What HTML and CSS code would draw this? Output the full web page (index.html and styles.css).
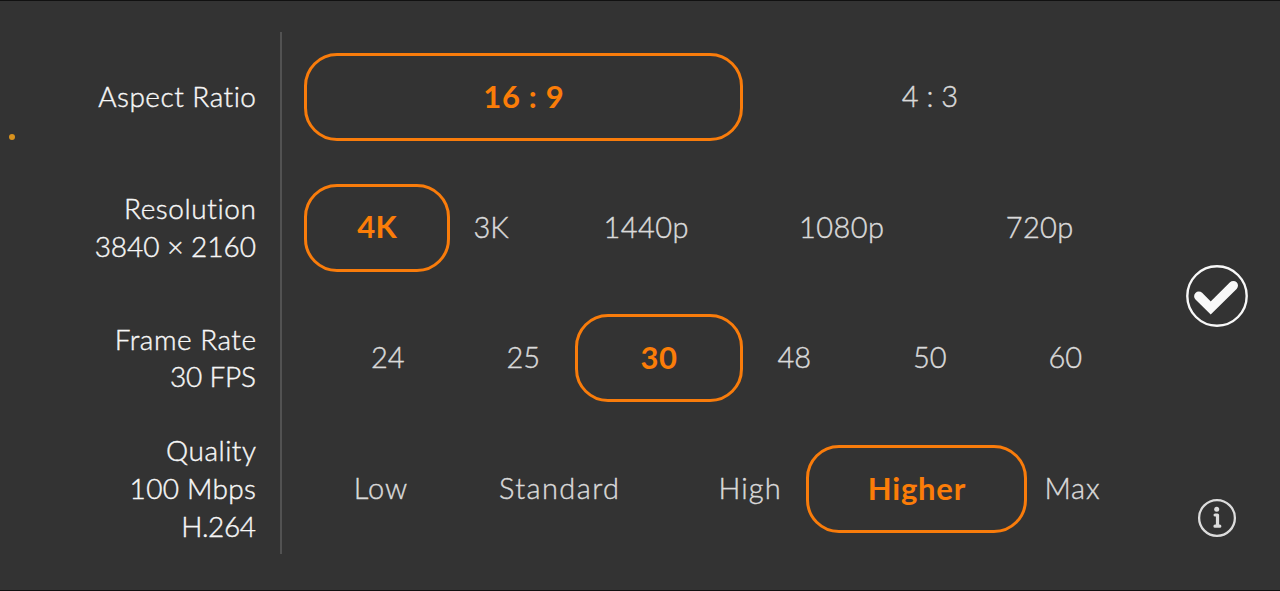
FILE: index.html
```html
<!DOCTYPE html>
<html lang="en">
<head>
<meta charset="utf-8">
<title>Video Settings</title>
<link rel="stylesheet" href="styles.css">
</head>
<body>
<main class="panel">
  <span class="indicator"></span>
  <section class="labels">
    <div class="label"><span class="t-aspect">Aspect Ratio</span></div>
    <div class="label"><span class="t-resolution">Resolution</span><span class="t-pixels">3840 × 2160</span></div>
    <div class="label"><span class="t-frame">Frame Rate</span><span class="t-fps">30 FPS</span></div>
    <div class="label"><span class="t-quality">Quality</span><span class="t-mbps">100 Mbps</span><span class="t-codec">H.264</span></div>
  </section>
  <section class="options">
    <div class="row row-aspect">
      <div class="option selected"><span class="t-169">16 : 9</span></div>
      <div class="option"><span class="t-43">4 : 3</span></div>
    </div>
    <div class="row row-resolution">
      <div class="option selected"><span class="t-4k">4K</span></div>
      <div class="option"><span class="t-3k">3K</span></div>
      <div class="option"><span class="t-1440">1440p</span></div>
      <div class="option"><span class="t-1080">1080p</span></div>
      <div class="option"><span class="t-720">720p</span></div>
    </div>
    <div class="row row-rate">
      <div class="option"><span class="t-num">24</span></div>
      <div class="option"><span class="t-num">25</span></div>
      <div class="option selected"><span class="t-30">30</span></div>
      <div class="option"><span class="t-num">48</span></div>
      <div class="option"><span class="t-num">50</span></div>
      <div class="option"><span class="t-num">60</span></div>
    </div>
    <div class="row row-quality">
      <div class="option"><span class="t-low">Low</span></div>
      <div class="option"><span class="t-standard">Standard</span></div>
      <div class="option"><span class="t-high">High</span></div>
      <div class="option selected"><span class="t-higher">Higher</span></div>
      <div class="option"><span class="t-max">Max</span></div>
    </div>
  </section>
  <aside class="actions">
    <svg class="confirm" viewBox="0 0 64 64">
      <circle cx="32" cy="32" r="29.7" fill="none" stroke="#f8f8f8" stroke-width="2.4"/>
      <path d="M13.8 32.2 25.7 44 48.3 21.6" fill="none" stroke="#f8f8f8" stroke-width="9.4" stroke-linecap="round" stroke-linejoin="miter"/>
    </svg>
    <svg class="info" viewBox="0 0 40 40">
      <circle cx="20" cy="20" r="17.9" fill="none" stroke="#dcdcdc" stroke-width="2.3"/>
      <circle cx="19.7" cy="11.2" r="2.5" fill="#dcdcdc"/>
      <path d="M18.1 17h2.4v10.8M18 28.2h4.8" fill="none" stroke="#dcdcdc" stroke-width="3.2" stroke-linecap="round" stroke-linejoin="round"/>
    </svg>
  </aside>
</main>
</body>
</html>
```
FILE: styles.css
```css
* { box-sizing: border-box; }
body { margin: 0; background: #333; font-family: Lato, "Open Sans", sans-serif; font-variant-ligatures: none; }
.panel {
  position: relative;
  display: flex;
  width: 1280px;
  height: 591px;
  padding: 31px 0 36px;
  border-top: 1px solid #111;
  border-bottom: 1px solid #111;
  background: #333;
  overflow: hidden;
}
.indicator {
  position: absolute;
  left: 9px;
  top: 133px;
  width: 6px;
  height: 6px;
  border-radius: 50%;
  background: #d8921e;
}
.labels {
  display: grid;
  grid-template-rows: repeat(4, 1fr);
  width: 282px;
  padding-right: 24px;
  border-right: 2px solid #525252;
  color: #f7f7f7;
}
.label {
  display: flex;
  flex-direction: column;
  justify-content: center;
  align-items: flex-end;
  font-size: 28px;
  font-weight: 300;
  line-height: 37.7px;
  white-space: nowrap;
  -webkit-text-stroke: 0.4px currentColor;
}
.label span,
.option span {
  letter-spacing: var(--track, 0px);
  margin-right: calc(var(--track, 0px) * -1);
}
.t-aspect { --track: 0.5px; }
.t-resolution { --track: 0.6px; }
.t-frame { --track: 0.5px; }
.t-fps { --track: -0.2px; }
.t-quality { --track: 0.5px; }
.t-mbps { --track: 0.3px; }
.t-codec { --track: -0.4px; }
.t-169 { --track: 0.7px; }
.t-4k { --track: 0.5px; }
.t-1440, .t-1080, .t-720 { --track: 0.4px; }
.t-30 { --track: 0.5px; }
.t-low { --track: 1px; }
.t-standard { --track: 1.4px; }
.t-high { --track: 1.1px; }
.t-higher { --track: 0.8px; }
.t-max { --track: 0.8px; }
.options {
  display: grid;
  grid-template-rows: repeat(4, 130.6px);
  width: 813px;
  margin-left: 38px;
}
.row { display: grid; align-items: center; }
.row-aspect { grid-template-columns: 407px 406px; }
.row-resolution { grid-template-columns: 114px 114px 196px 195px 201px; }
.row-rate { grid-template-columns: repeat(6, 135.5px); }
.row-quality { grid-template-columns: 121px 236px 145px 189px 122px; }
.option {
  display: flex;
  align-items: center;
  justify-content: center;
  height: 88px;
  padding-bottom: 3px;
  color: #dadada;
  font-size: 29px;
  font-weight: 300;
  white-space: nowrap;
  -webkit-text-stroke: 0.4px currentColor;
}
.selected {
  margin: 0 -16px;
  border: 3px solid #f97c0b;
  border-radius: 33px;
  color: #fb7d08;
  font-size: 31px;
  font-weight: 700;
  -webkit-text-stroke: 0;
}
.actions {
  display: flex;
  flex-direction: column;
  align-items: center;
  width: 64px;
  margin-left: 52px;
  padding-top: 231.5px;
}
.confirm { width: 64px; height: 64px; }
.info { width: 40px; height: 40px; margin-top: 170px; }
```
